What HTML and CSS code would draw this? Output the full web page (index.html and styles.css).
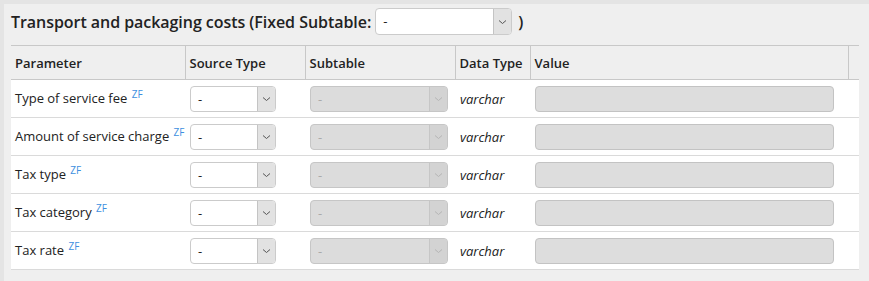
FILE: index.html
```html
<!DOCTYPE html>
<html>
<head>
<meta charset="utf-8">
<link rel="stylesheet" href="styles.css">
</head>
<body>
<div class="panel">
  <div class="title">
    <span>Transport and packaging costs (Fixed Subtable:</span>
    <div class="sel sel-title"><span class="val">-</span><span class="arrow"><svg width="9" height="6" viewBox="0 0 9 6"><path d="M1 1.5 L4.5 4.5 L8 1.5" fill="none" stroke="#555" stroke-width="1"/></svg></span></div>
    <span>)</span>
  </div>
  <table class="grid">
    <colgroup>
      <col class="c1"><col class="c2"><col class="c3"><col class="c4"><col class="c5"><col class="c6">
    </colgroup>
    <thead>
      <tr><th>Parameter</th><th>Source Type</th><th>Subtable</th><th>Data Type</th><th>Value</th><th></th></tr>
    </thead>
    <tbody>
      <tr>
        <td class="param">Type of service fee <sup class="zf">ZF</sup></td>
        <td><div class="sel sel-src"><span class="val">-</span><span class="arrow"><svg width="9" height="6" viewBox="0 0 9 6"><path d="M1 1.5 L4.5 4.5 L8 1.5" fill="none" stroke="#555" stroke-width="1"/></svg></span></div></td>
        <td><div class="sel sel-sub dis"><span class="val">-</span><span class="arrow"><svg width="9" height="6" viewBox="0 0 9 6"><path d="M1 1.5 L4.5 4.5 L8 1.5" fill="none" stroke="#b5b5b5" stroke-width="1"/></svg></span></div></td>
        <td class="dtype">varchar</td>
        <td><div class="inp"></div></td>
        <td></td>
      </tr>
      <tr>
        <td class="param">Amount of service charge <sup class="zf">ZF</sup></td>
        <td><div class="sel sel-src"><span class="val">-</span><span class="arrow"><svg width="9" height="6" viewBox="0 0 9 6"><path d="M1 1.5 L4.5 4.5 L8 1.5" fill="none" stroke="#555" stroke-width="1"/></svg></span></div></td>
        <td><div class="sel sel-sub dis"><span class="val">-</span><span class="arrow"><svg width="9" height="6" viewBox="0 0 9 6"><path d="M1 1.5 L4.5 4.5 L8 1.5" fill="none" stroke="#b5b5b5" stroke-width="1"/></svg></span></div></td>
        <td class="dtype">varchar</td>
        <td><div class="inp"></div></td>
        <td></td>
      </tr>
      <tr>
        <td class="param">Tax type <sup class="zf">ZF</sup></td>
        <td><div class="sel sel-src"><span class="val">-</span><span class="arrow"><svg width="9" height="6" viewBox="0 0 9 6"><path d="M1 1.5 L4.5 4.5 L8 1.5" fill="none" stroke="#555" stroke-width="1"/></svg></span></div></td>
        <td><div class="sel sel-sub dis"><span class="val">-</span><span class="arrow"><svg width="9" height="6" viewBox="0 0 9 6"><path d="M1 1.5 L4.5 4.5 L8 1.5" fill="none" stroke="#b5b5b5" stroke-width="1"/></svg></span></div></td>
        <td class="dtype">varchar</td>
        <td><div class="inp"></div></td>
        <td></td>
      </tr>
      <tr>
        <td class="param">Tax category <sup class="zf">ZF</sup></td>
        <td><div class="sel sel-src"><span class="val">-</span><span class="arrow"><svg width="9" height="6" viewBox="0 0 9 6"><path d="M1 1.5 L4.5 4.5 L8 1.5" fill="none" stroke="#555" stroke-width="1"/></svg></span></div></td>
        <td><div class="sel sel-sub dis"><span class="val">-</span><span class="arrow"><svg width="9" height="6" viewBox="0 0 9 6"><path d="M1 1.5 L4.5 4.5 L8 1.5" fill="none" stroke="#b5b5b5" stroke-width="1"/></svg></span></div></td>
        <td class="dtype">varchar</td>
        <td><div class="inp"></div></td>
        <td></td>
      </tr>
      <tr>
        <td class="param">Tax rate <sup class="zf">ZF</sup></td>
        <td><div class="sel sel-src"><span class="val">-</span><span class="arrow"><svg width="9" height="6" viewBox="0 0 9 6"><path d="M1 1.5 L4.5 4.5 L8 1.5" fill="none" stroke="#555" stroke-width="1"/></svg></span></div></td>
        <td><div class="sel sel-sub dis"><span class="val">-</span><span class="arrow"><svg width="9" height="6" viewBox="0 0 9 6"><path d="M1 1.5 L4.5 4.5 L8 1.5" fill="none" stroke="#b5b5b5" stroke-width="1"/></svg></span></div></td>
        <td class="dtype">varchar</td>
        <td><div class="inp"></div></td>
        <td></td>
      </tr>
    </tbody>
  </table>
</div>
</body>
</html>
```
FILE: styles.css
```css
html, body {
  margin: 0;
  padding: 0;
  background: #e4e4e4;
  font-family: "Open Sans", "Liberation Sans", sans-serif;
  color: #222;
}
.panel {
  margin: 4px 0 0 4px;
  padding: 4px 10px 0 7px;
  background: #efefef;
  height: 277px;
  box-sizing: border-box;
}
.title {
  display: flex;
  align-items: center;
  gap: 4px;
  height: 27px;
  font-size: 16px;
  font-weight: 600;
  letter-spacing: -0.05px;
  color: #222;
  margin-bottom: 10px;
  white-space: nowrap;
}
.title .sel-title { margin-right: 2px; }
.sel {
  display: flex;
  align-items: stretch;
  height: 26px;
  box-sizing: border-box;
  border: 1px solid #cbcbcb;
  border-radius: 4px;
  background: #fff;
  overflow: hidden;
  font-size: 13px;
  font-weight: 400;
  letter-spacing: 0;
  color: #222;
}
.sel .val {
  flex: 1;
  padding-left: 7px;
  line-height: 24px;
}
.sel .arrow {
  width: 17px;
  background: #e2e2e2;
  border-left: 1px solid #c4c4c4;
  display: flex;
  align-items: center;
  justify-content: center;
}
.sel-title {
  width: 137px;
  height: 27px;
}
.sel-title .val { line-height: 25px; }
.sel-src { width: 86px; }
.sel-sub { width: 138px; }
.sel.dis {
  background: #dcdcdc;
  border-color: #c6c6c6;
  color: #aaa;
}
.sel.dis .arrow {
  background: #d3d3d3;
  border-left-color: #c6c6c6;
}
.grid {
  border-collapse: collapse;
  width: 848px;
  table-layout: fixed;
  font-size: 13px;
}
.c1 { width: 174px; }
.c2 { width: 120px; }
.c3 { width: 150px; }
.c4 { width: 75px; }
.c5 { width: 318px; }
.c6 { width: 11px; }
.grid thead tr { height: 34px; }
.grid th {
  text-align: left;
  font-weight: 600;
  padding: 0 4px;
  border-top: 1px solid #c8c8c8;
  border-bottom: 1px solid #c8c8c8;
  border-left: 1px solid #c8c8c8;
  background: #efefef;
  color: #222;
  white-space: nowrap;
}
.grid th:first-child { border-left: none; }
.grid tbody tr { height: 38px; }
.grid td {
  background: #fff;
  padding: 0 5px;
  border-bottom: 1px solid #dadada;
  vertical-align: middle;
  white-space: nowrap;
}
.grid td.param { padding-left: 4px; padding-bottom: 2px; color: #222; }
.zf {
  color: #3d8fe0;
  font-size: 10px;
  line-height: 0;
  vertical-align: 5px;
  margin-left: 1px;
}
.dtype { font-style: italic; color: #222; }
.inp {
  width: 299px;
  height: 26px;
  box-sizing: border-box;
  background: #dddddd;
  border: 1px solid #c3c3c3;
  border-radius: 4px;
}
```
